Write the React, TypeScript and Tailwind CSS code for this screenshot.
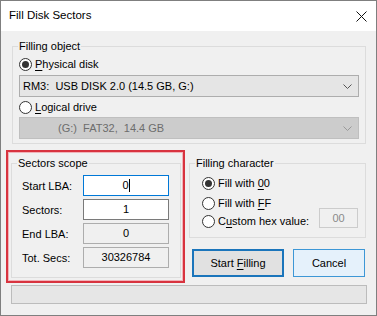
import type { ReactNode } from 'react'

function Radio({ checked }: { checked?: boolean }) {
  return (
    <span className="w-[13px] h-[13px] shrink-0 rounded-full border border-[#333] bg-white flex items-center justify-center">
      {checked && <span className="w-[7px] h-[7px] rounded-full bg-[#333]" />}
    </span>
  )
}

function RadioRow({ checked, children, className = '' }: { checked?: boolean; children: ReactNode; className?: string }) {
  return (
    <div className={`h-[14px] flex items-center gap-[3px] ${className}`}>
      <Radio checked={checked} />
      <span className="leading-[14px] whitespace-pre">{children}</span>
    </div>
  )
}

function GroupBox({ title, className, children }: { title: string; className: string; children: ReactNode }) {
  return (
    <div className={`relative border border-[#dcdcdc] ${className}`}>
      <span className="absolute -top-[8px] left-[5px] bg-[#f0f0f0] px-[1px] leading-[14px]">{title}</span>
      {children}
    </div>
  )
}

function Chevron({ color }: { color: string }) {
  return (
    <svg width="9" height="5" viewBox="0 0 9 5" className="shrink-0">
      <polyline points="0.5,0.5 4.5,4.5 8.5,0.5" fill="none" stroke={color} strokeWidth="1" />
    </svg>
  )
}

const u = 'underline underline-offset-[2px]'

export default function App() {
  const rows = [
    { label: 'Start LBA:', value: '0', kind: 'focus' },
    { label: 'Sectors:', value: '1', kind: 'edit' },
    { label: 'End LBA:', value: '0', kind: 'ro' },
    { label: 'Tot. Secs:', value: '30326784', kind: 'ro' },
  ]

  return (
    <div
      className="w-[377px] h-[316px] border border-[#7f7f7f] bg-[#f0f0f0] text-[11px] text-black flex flex-col"
      style={{ fontFamily: '"Liberation Sans", Arial, sans-serif' }}
    >
      {/* title bar */}
      <div className="h-[30px] shrink-0 bg-white flex items-center justify-between pl-[8px] pr-[9px]">
        <span className="text-[11.5px]">Fill Disk Sectors</span>
        <svg width="11" height="11" viewBox="0 0 11 11">
          <path d="M0.5 0.5 L10.5 10.5 M10.5 0.5 L0.5 10.5" stroke="#111" strokeWidth="1" />
        </svg>
      </div>

      {/* filling object */}
      <GroupBox title="Filling object" className="mt-[15px] ml-[11px] w-[354px] h-[98px] pt-[10px] pl-[6px] flex flex-col">
        <RadioRow checked>
          <span className={u}>P</span>hysical disk
        </RadioRow>
        <div className="mt-[4px] w-[340px] h-[22px] border border-[#adadad] bg-[#e5e5e5] flex items-center justify-between pl-[3px] pr-[6px]">
          <span className="whitespace-pre">RM3:  USB DISK 2.0 (14.5 GB, G:)</span>
          <Chevron color="#555" />
        </div>
        <RadioRow className="mt-[3px]">
          <span className={u}>L</span>ogical drive
        </RadioRow>
        <div className="mt-[3px] w-[340px] h-[22px] border border-[#bfbfbf] bg-[#cccccc] flex items-center justify-between pl-[38px] pr-[6px] text-[#6d6d6d]">
          <span className="whitespace-pre">(G:)  FAT32,  14.4 GB</span>
          <Chevron color="#999" />
        </div>
      </GroupBox>

      <div className="flex mt-[6px] ml-[5px]">
        {/* sectors scope, highlighted */}
        <div className="w-[179px] h-[133px] border-2 border-[#d8333f] shadow-[inset_0_0_0_1px_#f1b3b9] pt-[11px] pl-[3px] pr-[2px] pb-[3px]">
          <GroupBox title="Sectors scope" className="w-[170px] h-[115px] pt-[11px] pl-[10px] flex flex-col gap-[3px]">
            {rows.map((r) => (
              <div key={r.label} className="h-[21px] flex items-center">
                <span className="w-[61px] pt-[2px]">{r.label}</span>
                <div
                  className={`w-[86px] h-[21px] border flex items-center justify-center ${
                    r.kind === 'focus'
                      ? 'border-[#0078d7] bg-white'
                      : r.kind === 'edit'
                        ? 'border-[#7a7a7a] bg-white'
                        : 'border-[#adadad] bg-[#f0f0f0]'
                  }`}
                >
                  <span>{r.value}</span>
                  {r.kind === 'focus' && <span className="inline-block w-px h-[13px] bg-black" />}
                </div>
              </div>
            ))}
          </GroupBox>
        </div>

        {/* right column */}
        <div className="ml-[4px] mt-[13px] flex flex-col">
          <GroupBox title="Filling character" className="w-[177px] h-[75px] pt-[12px] pl-[12px] pr-[7px] flex flex-col">
            <RadioRow checked>
              Fill with <span className={u}>0</span>0
            </RadioRow>
            <RadioRow className="mt-[6px]">
              Fill with <span className={u}>F</span>F
            </RadioRow>
            <div className="mt-[4px] h-[14px] flex items-center justify-between">
              <RadioRow>
                C<span className={u}>u</span>stom hex value:
              </RadioRow>
              <div className="self-start -mt-[6px] w-[39px] h-[20px] border border-[#cccccc] bg-[#f0f0f0] flex items-center justify-center text-[#8a8a8a]">
                00
              </div>
            </div>
          </GroupBox>

          <div className="mt-[11px] flex">
            <button className="ml-[3px] w-[92px] h-[28px] border-2 border-[#1b75bb] bg-[#e1e1e1] flex items-center justify-center">
              <span>
                Start <span className={u}>F</span>illing
              </span>
            </button>
            <button className="ml-[9px] w-[72px] h-[28px] border border-[#3d97d6] bg-[#e5f1fb] flex items-center justify-center">
              Cancel
            </button>
          </div>
        </div>
      </div>

      {/* progress */}
      <div className="mt-[2px] ml-[10px] w-[356px] h-[19px] border border-[#bcbcbc] bg-[#e6e6e6]" />
    </div>
  )
}
